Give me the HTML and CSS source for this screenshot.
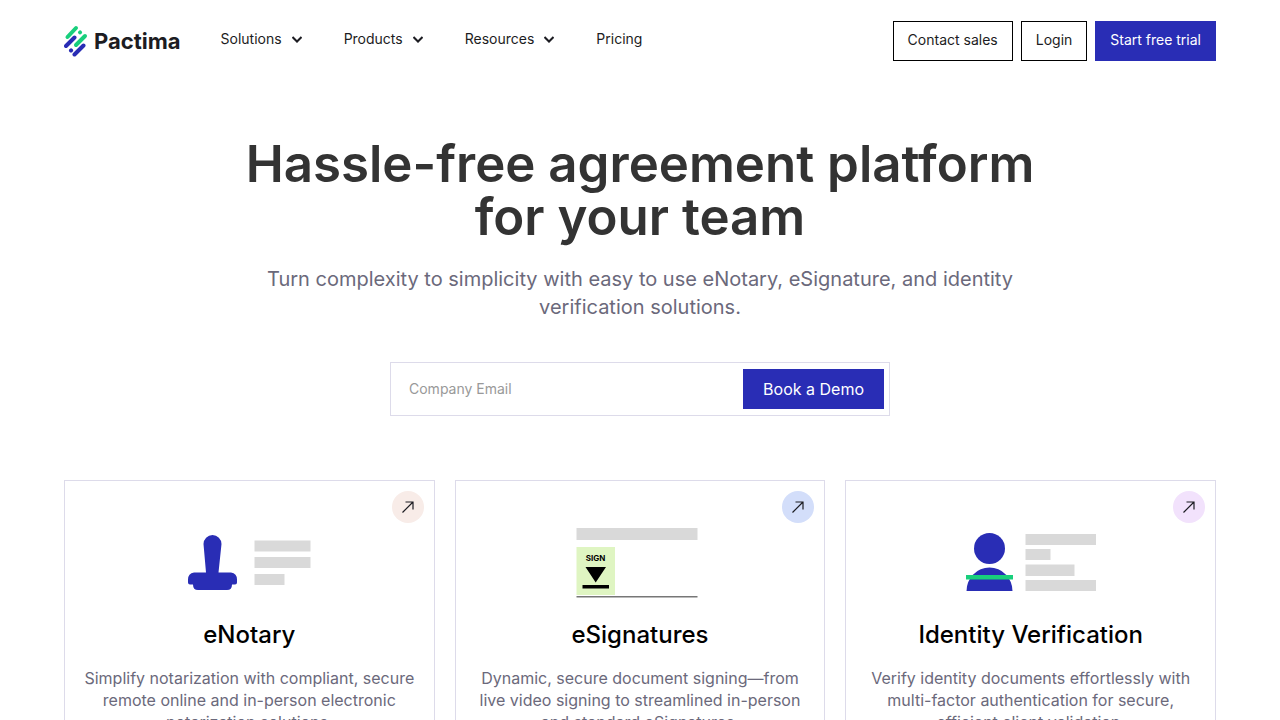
FILE: index.html
```html
<!DOCTYPE html>
<html lang="en">
<head>
<meta charset="utf-8">
<meta name="viewport" content="width=device-width, initial-scale=1.0">
<title>Pactima</title>
<link rel="stylesheet" href="styles.css">
</head>
<body>
<header class="header">
  <a class="logo" href="#">
    <svg class="logo-mark" width="24" height="32" viewBox="0 0 24 32" fill="none" stroke-width="4" stroke-linecap="round" aria-hidden="true">
      <g stroke="#18cf7c"><path d="M3.5 12 12 3M16 7.4 16.1 7.3M12 20 21 11"/></g>
      <g stroke="#292db5"><path d="M2 21 10.500 12.500M7 25.500 7.100 25.400M10.500 29.500 19.500 20.500"/></g>
    </svg>
    <span>Pactima</span>
  </a>
  <nav class="nav">
    <button class="nav-item">Solutions <svg class="chevron" width="10" height="7" viewBox="0 0 10 7"><path d="M.5 1l4.500 4.500L9.500 1"/></svg></button>
    <button class="nav-item">Products <svg class="chevron" width="10" height="7" viewBox="0 0 10 7"><path d="M.5 1l4.500 4.500L9.500 1"/></svg></button>
    <button class="nav-item">Resources <svg class="chevron" width="10" height="7" viewBox="0 0 10 7"><path d="M.5 1l4.500 4.500L9.500 1"/></svg></button>
    <a class="nav-item" href="#">Pricing</a>
  </nav>
  <div class="actions">
    <a class="btn" href="#">Contact sales</a>
    <a class="btn" href="#">Login</a>
    <a class="btn btn-primary" href="#">Start free trial</a>
  </div>
</header>

<main>
  <section class="hero">
    <h1>Hassle-free agreement platform for your team</h1>
    <p class="lead">Turn complexity to simplicity with easy to use eNotary, eSignature, and identity verification solutions.</p>
    <form class="demo-form">
      <input class="demo-email" type="email" placeholder="Company Email" aria-label="Company Email">
      <button class="demo-btn" type="submit">Book a Demo</button>
    </form>
  </section>

  <section class="cards">
    <article class="card">
      <a class="card-link peach" href="#" aria-label="eNotary"><svg width="12" height="12" viewBox="0 0 12 12"><path d="M.5 11.500 11 1M3.500 1H11V8.500"/></svg></a>
      <svg class="art" width="140" height="80" viewBox="0 0 140 80" aria-hidden="true">
        <path fill="#292db5" d="M24.500 19a9 9 0 0 1 18 0L39.500 47.500H52q6 1 6 7v3q0 2-2 2h-3q0 5.500-5 5.500H19q-5 0-5-5.500h-3q-2 0-2-2v-3q0-6 6-7h12z"/>
        <path fill="#d9d9d9" d="M75.500 15.500h56v11h-56zM75.500 32h56v11h-56zM75.500 49h30v11h-30z"/>
      </svg>
      <h2>eNotary</h2>
      <p>Simplify notarization with compliant, secure remote online and in-person electronic notarization solutions.</p>
    </article>
    <article class="card">
      <a class="card-link blue" href="#" aria-label="eSignatures"><svg width="12" height="12" viewBox="0 0 12 12"><path d="M.5 11.500 11 1M3.500 1H11V8.500"/></svg></a>
      <svg class="art" width="140" height="80" viewBox="0 0 140 80" aria-hidden="true">
        <path fill="#d9d9d9" d="M6.500 3h121v12h-121z"/>
        <path fill="#dff5c2" d="M6.500 22H45v48H6.500z"/>
        <text class="sign" x="25.500" y="36" text-anchor="middle">SIGN</text>
        <path d="M15.500 42h20.500L25.700 57.500zM12.500 60H39v3.500H12.500z"/>
        <path fill="#777" d="M6.500 71h121v1.500h-121z"/>
      </svg>
      <h2>eSignatures</h2>
      <p>Dynamic, secure document signing—from live video signing to streamlined in-person and standard eSignatures.</p>
    </article>
    <article class="card">
      <a class="card-link violet" href="#" aria-label="Identity Verification"><svg width="12" height="12" viewBox="0 0 12 12"><path d="M.5 11.500 11 1M3.500 1H11V8.500"/></svg></a>
      <svg class="art" width="140" height="80" viewBox="0 0 140 80" aria-hidden="true">
        <circle cx="28.500" cy="23.500" r="15.500" fill="#292db5"/>
        <path fill="#292db5" d="M5.500 66a23 23.500 0 0 1 46 0z"/>
        <path fill="#18cf7c" d="M5 50h47v4.500H5z"/>
        <path fill="#d9d9d9" d="M64.500 9H135v11H64.500zM64.500 24h25v11h-25zM64.500 39.500H113.500v11.500H64.500zM64.500 55H135v11H64.500z"/>
      </svg>
      <h2>Identity Verification</h2>
      <p>Verify identity documents effortlessly with multi-factor authentication for secure, efficient client validation.</p>
    </article>
  </section>
</main>
</body>
</html>
```

FILE: styles.css
```css
* { box-sizing: border-box; }
body {
  margin: 0;
  background: #fff;
  color: #1c1c22;
  font-family: Inter, "Liberation Sans", sans-serif;
}
a { color: inherit; text-decoration: none; }
button, input { font-family: inherit; }

.header {
  display: flex;
  align-items: center;
  padding: 21px 64px 18px;
}
.logo {
  display: flex;
  align-items: center;
  gap: 6px;
  font-size: 22px;
  font-weight: 700;
}
.nav { display: flex; gap: 42px; margin-left: 40px; padding-bottom: 4px; }
.nav-item {
  display: flex;
  align-items: center;
  gap: 10px;
  padding: 0;
  border: none;
  background: none;
  color: #1c1c22;
  font-size: 14px;
  line-height: 20px;
  cursor: pointer;
}
.chevron { fill: none; stroke: #1c1c22; stroke-width: 2; }
.actions { display: flex; gap: 8px; margin-left: auto; }
.btn {
  padding: 0 14px;
  border: 1px solid #000;
  font-size: 14px;
  line-height: 36px;
  padding-bottom: 2px;
}
.btn-primary { background: #292db5; border-color: #292db5; color: #fff; }

.hero { padding: 58px 64px 64px; text-align: center; }
h1 {
  max-width: 840px;
  margin: 0 auto 22px;
  color: #333;
  font-size: 51px;
  font-weight: 600;
  line-height: 53px;
}
.lead {
  max-width: 780px;
  margin: 0 auto 41px;
  color: #6b697b;
  font-size: 20px;
  line-height: 28px;
}
.demo-form {
  display: flex;
  max-width: 500px;
  margin: 0 auto;
  padding: 6px 5px;
  border: 1px solid #dddbea;
}
.demo-email {
  flex: 1;
  min-width: 0;
  padding: 0 13px 2px;
  border: none;
  font-size: 14px;
}
.demo-email::placeholder { color: #999; }
.demo-btn {
  height: 40px;
  padding: 0 20px;
  border: none;
  background: #292db5;
  color: #fff;
  font-size: 16px;
  cursor: pointer;
}

.cards {
  display: grid;
  grid-template-columns: repeat(3, 1fr);
  gap: 20px;
  padding: 0 64px 64px;
}
.card {
  position: relative;
  padding: 44px 16px 32px;
  border: 1px solid #dddbea;
  text-align: center;
}
.card-link {
  position: absolute;
  top: 10px;
  right: 10px;
  display: flex;
  align-items: center;
  justify-content: center;
  width: 32px;
  height: 32px;
  border-radius: 50%;
}
.card-link svg { fill: none; stroke: #1c1c22; stroke-width: 1.2; }
.peach { background: #f8ece8; }
.blue { background: #d3defa; }
.violet { background: #f2e2fc; }
.art { display: block; margin: 0 auto 14px; }
.sign { font-size: 8px; font-weight: 700; }
.card h2 {
  margin: 0 0 16px;
  color: #000;
  font-size: 24px;
  font-weight: 500;
  line-height: 32px;
}
.card p {
  margin: 0;
  color: #6b697b;
  font-size: 16px;
  line-height: 22px;
}
```
